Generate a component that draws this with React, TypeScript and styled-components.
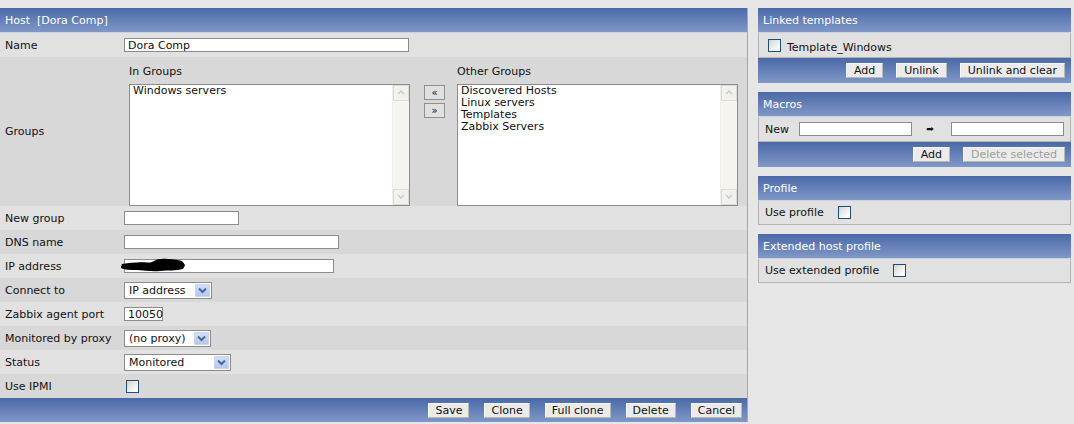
import styled, { createGlobalStyle } from "styled-components"

const GlobalStyle = createGlobalStyle`
  body {
    margin: 0;
    background: #e6e6e6;
    font-family: "DejaVu Sans", Verdana, sans-serif;
    font-size: 11px;
    color: #111;
  }
`

const Page = styled.div`
  display: flex;
  align-items: flex-start;
  gap: 10px;
  padding-top: 8px;
  width: 1074px;
  height: 416px;
`

const Bar = styled.div<{ $align?: string; $gap?: number }>`
  display: flex;
  align-items: center;
  justify-content: ${(p) => p.$align || "flex-start"};
  gap: ${(p) => p.$gap || 14}px;
  height: 24px;
  padding: 0 5px;
  background: linear-gradient(#4a69a7, #8098c7);
  color: #fff;
  box-sizing: border-box;
`

const Header = styled(Bar)`
  height: 25px;
  border-bottom: 1px solid #c9d2e2;
`

const MainPanel = styled.div`
  width: 748px;
  border-right: 1px solid #a8a8a8;
  box-sizing: border-box;
`

const Row = styled.div<{ $alt?: boolean; $h?: number }>`
  display: grid;
  grid-template-columns: 124px 1fr;
  align-items: center;
  height: ${(p) => p.$h || 24}px;
  background: ${(p) => (p.$alt ? "#d8d8d8" : "#e1e1e1")};
`

const Label = styled.div`
  padding-left: 5px;
`

const TextInput = styled.div<{ $w: number; $ml?: number }>`
  position: relative;
  width: ${(p) => p.$w}px;
  height: 14px;
  margin-left: ${(p) => p.$ml || 0}px;
  line-height: 14px;
  background: #fff;
  border: 1px solid #8c8c8c;
  box-sizing: border-box;
  padding-left: 3px;
  font-size: 11px;
`

const Scribble = styled.svg`
  position: absolute;
  left: -5px;
  top: -4px;
`

const SelectBox = styled.div<{ $w: number }>`
  display: flex;
  align-items: center;
  justify-content: space-between;
  width: ${(p) => p.$w}px;
  height: 17px;
  background: #fff;
  border: 1px solid #8c8c8c;
  box-sizing: border-box;
  padding: 0 1px 0 4px;
`

const DropArrow = styled.div`
  display: flex;
  align-items: center;
  justify-content: center;
  width: 15px;
  height: 13px;
  background: linear-gradient(#d2def8, #b3c7ef);
  border: 1px solid #c7d5f2;
  box-sizing: border-box;
  border-radius: 1px;
`

const Check = styled.div<{ $ml?: number }>`
  width: 13px;
  height: 13px;
  margin-left: ${(p) => p.$ml || 0}px;
  border: 1px solid #1d4f7e;
  box-sizing: border-box;
  background: linear-gradient(135deg, #d3d3cf, #ffffff 85%);
`

const GroupsArea = styled.div`
  display: flex;
  align-items: flex-start;
  padding-top: 7px;
`

const GroupCol = styled.div<{ $ml: number }>`
  display: flex;
  flex-direction: column;
  margin-left: ${(p) => p.$ml}px;
  gap: 6px;
`

const ListBox = styled.div`
  display: flex;
  width: 281px;
  height: 122px;
  background: #fff;
  border: 1px solid #8c8c8c;
  box-sizing: border-box;
`

const ListItems = styled.div`
  flex: 1;
  padding: 0 3px;
  line-height: 12px;
`

const ScrollTrack = styled.div`
  display: flex;
  flex-direction: column;
  justify-content: space-between;
  width: 16px;
  background: #f5f4ee;
  border-left: 1px solid #efeee6;
`

const ScrollBtn = styled.div`
  display: flex;
  align-items: center;
  justify-content: center;
  height: 16px;
  background: #f2f2ec;
  border: 1px solid #dcdcd4;
  box-sizing: border-box;
`

const MoveCol = styled.div`
  display: flex;
  flex-direction: column;
  gap: 3px;
  margin-left: 14px;
  margin-top: 20px;
`

const MoveBtn = styled.div`
  display: flex;
  align-items: center;
  justify-content: center;
  width: 21px;
  height: 15px;
  background: #e0e0e0;
  border: 1px solid #909090;
  box-sizing: border-box;
  font-size: 10px;
`

const Btn = styled.div<{ $disabled?: boolean; $pad?: number }>`
  display: flex;
  align-items: center;
  height: 15px;
  padding: 0 ${(p) => p.$pad || 7}px;
  background: #ebebeb;
  border: 1px solid #f7f7f7;
  border-right-color: #b7b7b7;
  border-bottom-color: #b7b7b7;
  box-sizing: border-box;
  color: ${(p) => (p.$disabled ? "#9d9d9d" : "#111")};
`

const SideCol = styled.div`
  display: flex;
  flex-direction: column;
  gap: 9px;
  width: 313px;
`

const SideBody = styled.div<{ $h?: number }>`
  display: flex;
  align-items: center;
  gap: 6px;
  height: ${(p) => p.$h || 24}px;
  padding: 0 6px;
  background: #e1e1e1;
  border: 1px solid #b3b3b3;
  border-top: none;
  box-sizing: border-box;
`

const SideBar = styled(Bar)`
  height: 25px;
  gap: 13px;
  padding-right: 6px;
`

const LowText = styled.span`
  margin-top: 5px;
`

const Arrow = styled.span`
  margin: 0 11px 0 8px;
  font-size: 9px;
`

const Chevron = () => (
  <svg width="9" height="7" viewBox="0 0 9 7">
    <path d="M1 1.5 L4.5 5 L8 1.5" stroke="#4d6693" strokeWidth="2" fill="none" />
  </svg>
)

const ScrollArrow = ({ up }: { up?: boolean }) => (
  <svg width="8" height="5" viewBox="0 0 8 5">
    <path d={up ? "M1 4 L4 1 L7 4" : "M1 1 L4 4 L7 1"} stroke="#c6c9d0" strokeWidth="1.4" fill="none" />
  </svg>
)

function Select({ w, value }: { w: number; value: string }) {
  return (
    <SelectBox $w={w}>
      <span>{value}</span>
      <DropArrow>
        <Chevron />
      </DropArrow>
    </SelectBox>
  )
}

function List({ items }: { items: string[] }) {
  return (
    <ListBox>
      <ListItems>
        {items.map((i) => (
          <div key={i}>{i}</div>
        ))}
      </ListItems>
      <ScrollTrack>
        <ScrollBtn>
          <ScrollArrow up />
        </ScrollBtn>
        <ScrollBtn>
          <ScrollArrow />
        </ScrollBtn>
      </ScrollTrack>
    </ListBox>
  )
}

export default function App() {
  return (
    <>
      <GlobalStyle />
      <Page>
        <MainPanel>
          <Header>Host&nbsp; [Dora Comp]</Header>
          <Row>
            <Label>Name</Label>
            <TextInput $w={285}>Dora Comp</TextInput>
          </Row>
          <Row $alt $h={149}>
            <Label>Groups</Label>
            <GroupsArea>
              <GroupCol $ml={5}>
                <span>In Groups</span>
                <List items={["Windows servers"]} />
              </GroupCol>
              <MoveCol>
                <MoveBtn>«</MoveBtn>
                <MoveBtn>»</MoveBtn>
              </MoveCol>
              <GroupCol $ml={12}>
                <span>Other Groups</span>
                <List items={["Discovered Hosts", "Linux servers", "Templates", "Zabbix Servers"]} />
              </GroupCol>
            </GroupsArea>
          </Row>
          <Row>
            <Label>New group</Label>
            <TextInput $w={115} />
          </Row>
          <Row $alt>
            <Label>DNS name</Label>
            <TextInput $w={215} />
          </Row>
          <Row>
            <Label>IP address</Label>
            <TextInput $w={210}>
              <Scribble width="66" height="18" viewBox="0 0 66 18">
                <path
                  d="M1 10 C6 7 12 8 18 7 C24 6 28 8 32 6 C36 3 42 2 48 3 C54 3 58 4 62 5 L65 9 L63 13 C56 15 48 14 40 15 C32 16 24 14 16 14 C10 14 5 14 1 12 Z"
                  fill="#000"
                />
                <path d="M2 10 Q18 7 34 9 T64 9" stroke="#000" strokeWidth="4" fill="none" />
              </Scribble>
            </TextInput>
          </Row>
          <Row $alt>
            <Label>Connect to</Label>
            <Select w={88} value="IP address" />
          </Row>
          <Row>
            <Label>Zabbix agent port</Label>
            <TextInput $w={39}>10050</TextInput>
          </Row>
          <Row $alt>
            <Label>Monitored by proxy</Label>
            <Select w={87} value="(no proxy)" />
          </Row>
          <Row>
            <Label>Status</Label>
            <Select w={107} value="Monitored" />
          </Row>
          <Row $alt>
            <Label>Use IPMI</Label>
            <Check $ml={2} />
          </Row>
          <Bar $align="flex-end" $gap={15}>
            <Btn $pad={6}>Save</Btn>
            <Btn $pad={6}>Clone</Btn>
            <Btn $pad={6}>Full clone</Btn>
            <Btn $pad={6}>Delete</Btn>
            <Btn $pad={6}>Cancel</Btn>
          </Bar>
        </MainPanel>

        <SideCol>
          <div>
            <Header>Linked templates</Header>
            <SideBody $h={25}>
              <Check $ml={3} />
              <LowText>Template_Windows</LowText>
            </SideBody>
            <SideBar $align="flex-end">
              <Btn>Add</Btn>
              <Btn>Unlink</Btn>
              <Btn>Unlink and clear</Btn>
            </SideBar>
          </div>
          <div>
            <Header>Macros</Header>
            <SideBody $h={25}>
              <span>New</span>
              <TextInput $w={114} $ml={4} />
              <Arrow>➡</Arrow>
              <TextInput $w={114} />
            </SideBody>
            <SideBar $align="flex-end">
              <Btn>Add</Btn>
              <Btn $disabled>Delete selected</Btn>
            </SideBar>
          </div>
          <div>
            <Header>Profile</Header>
            <SideBody>
              <span>Use profile</span>
              <Check $ml={8} />
            </SideBody>
          </div>
          <div>
            <Header>Extended host profile</Header>
            <SideBody>
              <span>Use extended profile</span>
              <Check $ml={8} />
            </SideBody>
          </div>
        </SideCol>
      </Page>
    </>
  )
}
